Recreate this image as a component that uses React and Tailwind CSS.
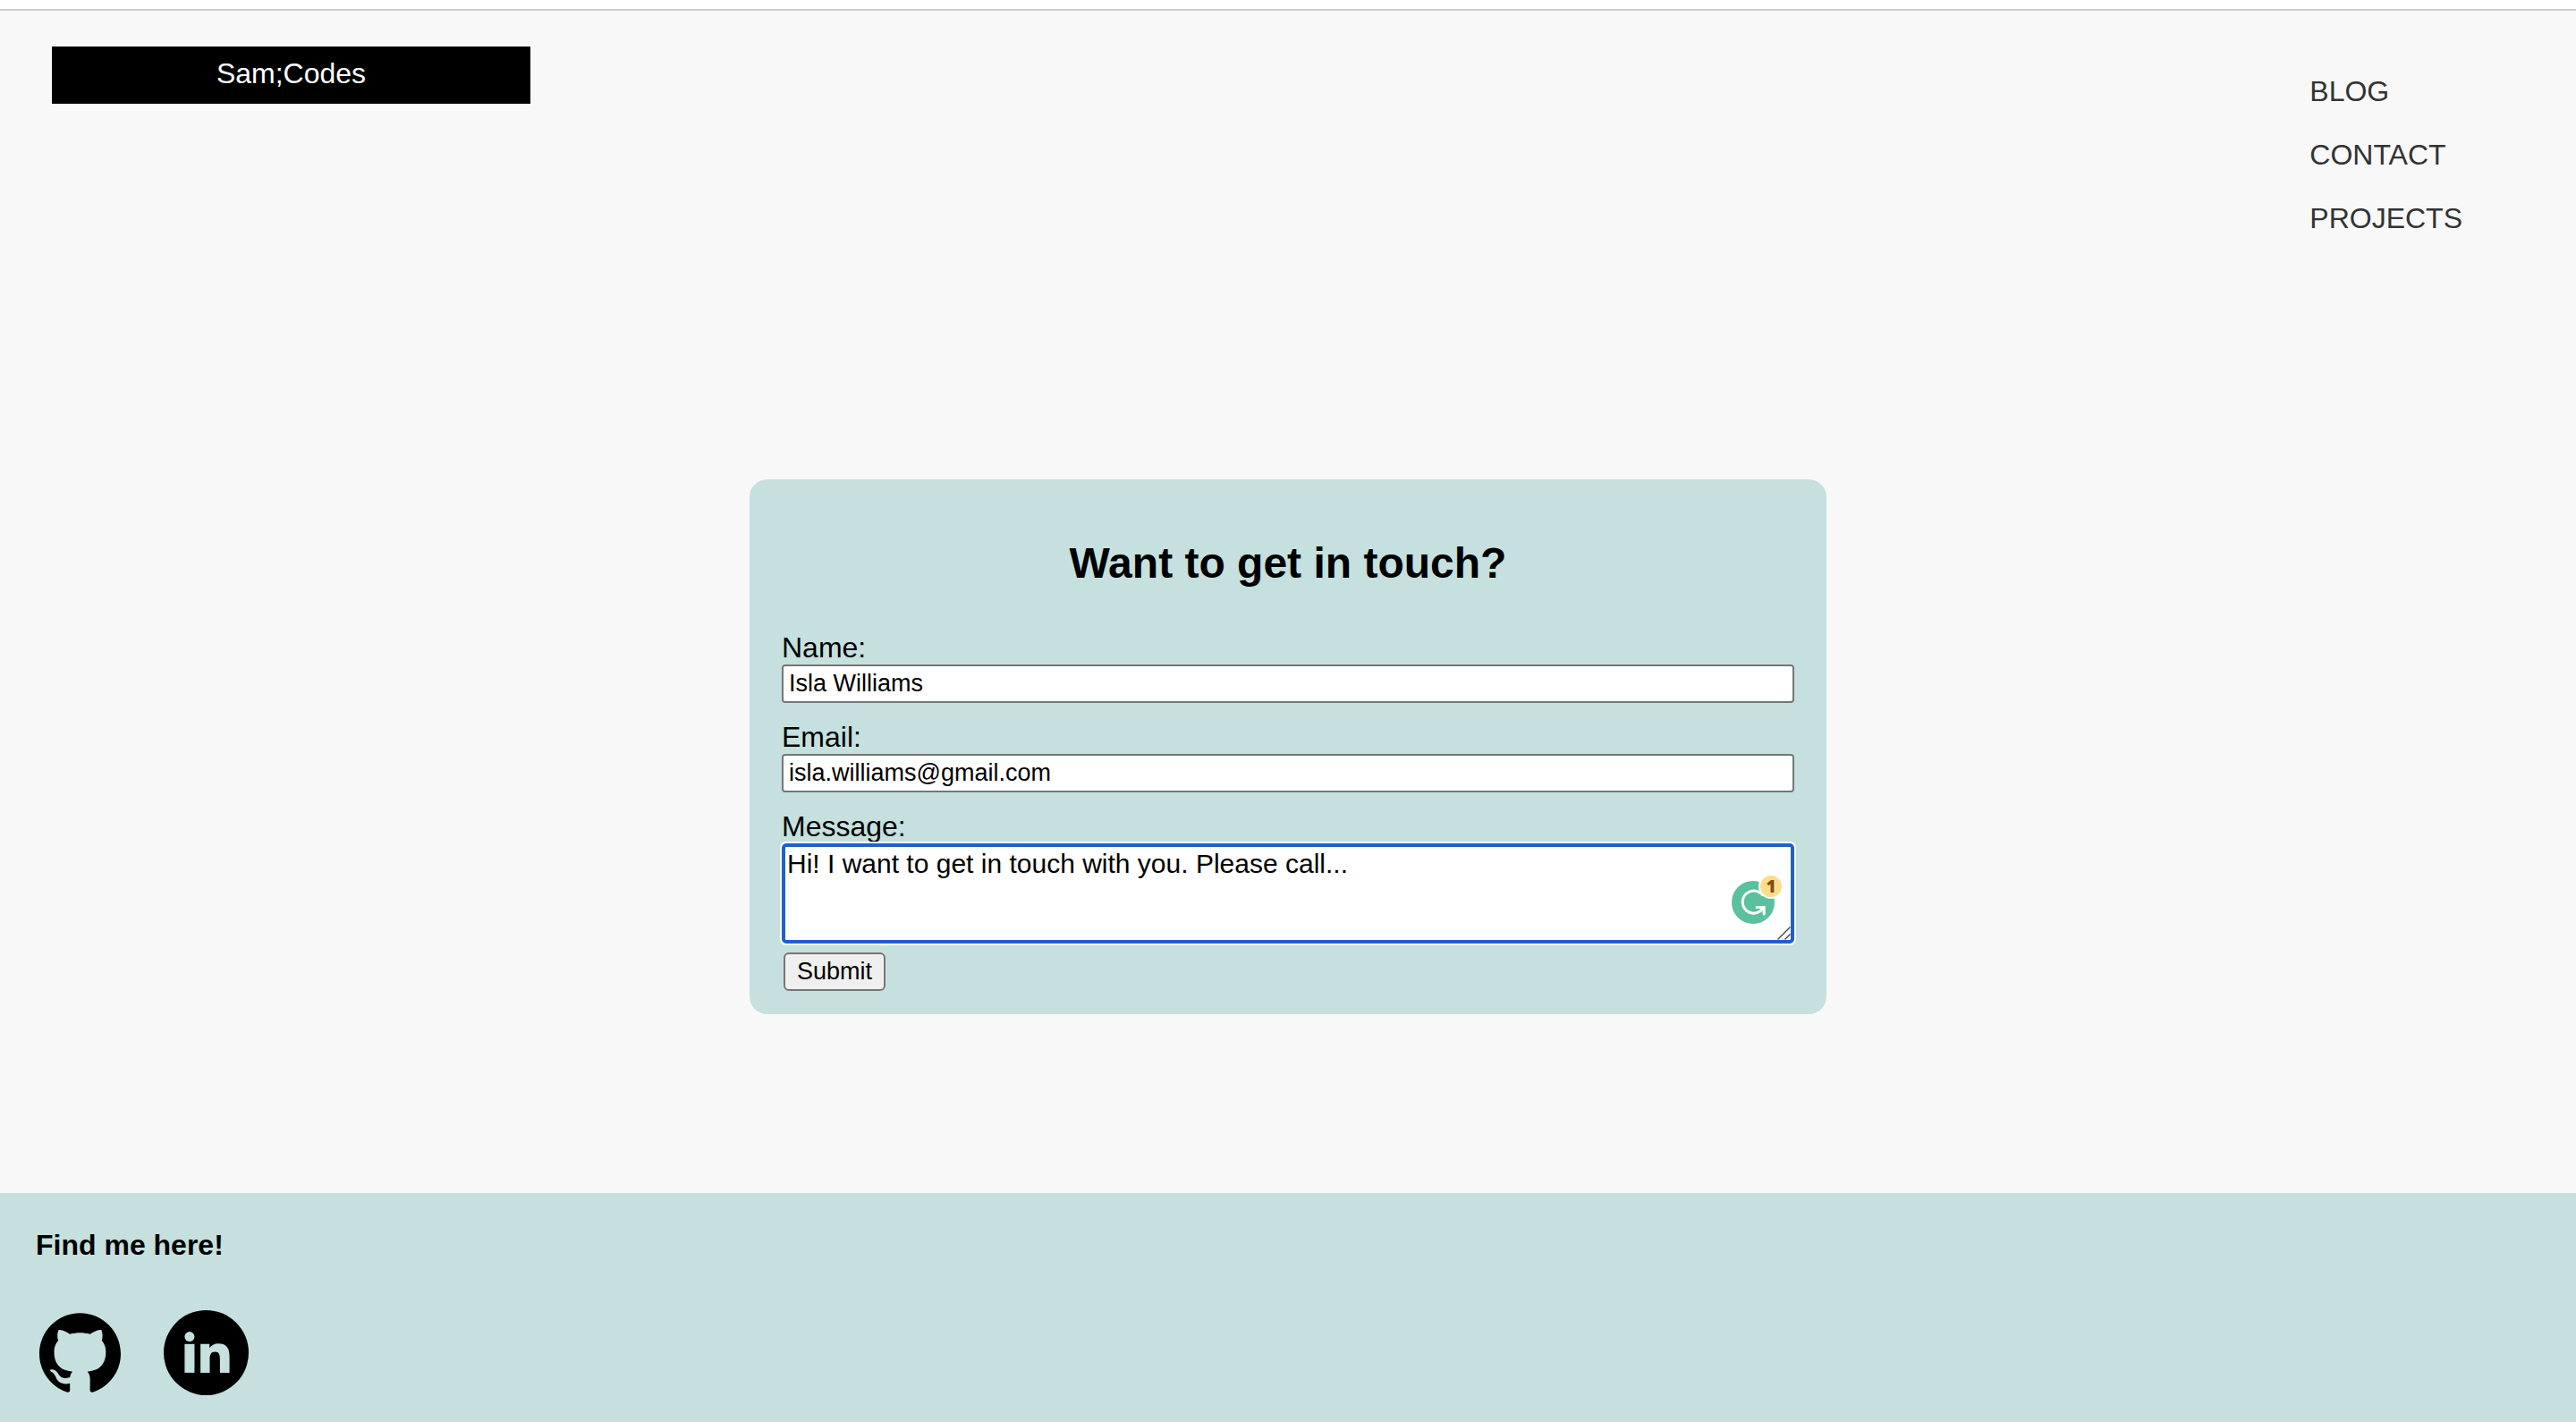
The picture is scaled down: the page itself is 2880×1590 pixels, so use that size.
import { SiGithub } from "react-icons/si";

const links = ["Blog", "Contact", "Projects"];

function TextField({ id, label, type, value }) {
  return (
    <div className="flex flex-col">
      <label htmlFor={id} className="text-[32px] leading-[37px]">
        {label}
      </label>
      <input
        id={id}
        type={type}
        defaultValue={value}
        className="h-[43px] w-full rounded-[4px] border-2 border-[#767676] bg-white px-1.5 text-[27px] text-black outline-none"
      />
    </div>
  );
}

function WritingBadge() {
  return (
    <div className="pointer-events-none absolute right-[12px] bottom-[20px] h-[56px] w-[58px]">
      <svg viewBox="0 0 58 56" className="h-full w-full" aria-hidden="true">
        <circle cx="24" cy="30" r="24" fill="#5bc09d" />
        <path
          d="M35 22.500A12.500 12.500 0 1 0 32 39.800L36 35.500"
          fill="none"
          stroke="#fff"
          strokeWidth="3"
        />
        <path
          d="M28 35.500H36.200V43"
          fill="none"
          stroke="#fff"
          strokeWidth="3"
          strokeLinecap="round"
        />
        <circle cx="44" cy="12" r="14" fill="#fff" />
        <circle cx="44" cy="12" r="12" fill="#fbde8b" />
      </svg>
      <span className="absolute top-0 right-[2px] w-6 text-center font-['Open_Sans',sans-serif] text-[19px] leading-6 font-extrabold text-[#7f4f16]">
        1
      </span>
    </div>
  );
}

function LinkedInLogo() {
  return (
    <svg viewBox="548 436 284 284" className="size-[95px]" aria-hidden="true">
      <circle cx="690" cy="578" r="142" fill="#000" />
      <g fill="#c5e0de">
        <circle cx="634.500" cy="524.500" r="16.500" />
        <path d="M618 549H651V645H618Z" />
        <path d="M671 549H701V562C707 553 717 547 731 547C758 547 768 563 768 592V645H736V599C736 585 733 575 720 575C706 575 702 585 702 599V645H671Z" />
      </g>
    </svg>
  );
}

export default function App() {
  return (
    <div className="flex min-h-screen flex-col bg-[#f8f8f8] font-['Liberation_Sans',Arial,sans-serif] text-black">
      <div className="h-3 border-b-2 border-[#cdcdcd] bg-white" />

      <header className="flex items-start justify-between pt-10 pr-[127px] pl-[58px]">
        <a
          href="#home"
          className="w-[535px] bg-black pt-3 pb-4 text-center text-[32px] leading-9 text-white"
        >
          Sam;Codes
        </a>
        <nav className="pt-8">
          <ul className="flex flex-col gap-[34px]">
            {links.map((link) => (
              <li key={link} className="text-[32px] leading-[37px] text-[#333] uppercase">
                <a href={"#" + link.toLowerCase()}>{link}</a>
              </li>
            ))}
          </ul>
        </nav>
      </header>

      <main className="flex flex-1 items-center justify-center pt-[72px]">
        <form className="w-[1204px] rounded-[20px] bg-[#c5e0de] px-9 pt-[66px] pb-[26px]">
          <h1 className="mb-12 text-center text-[48px] leading-[56px] font-bold">
            Want to get in touch?
          </h1>
          <div className="flex flex-col gap-5">
            <TextField id="name" label="Name:" type="text" value="Isla Williams" />
            <TextField id="email" label="Email:" type="email" value="isla.williams@gmail.com" />
            <div className="flex flex-col">
              <label htmlFor="message" className="text-[32px] leading-[37px]">
                Message:
              </label>
              <div className="relative">
                <textarea
                  id="message"
                  defaultValue="Hi! I want to get in touch with you. Please call..."
                  className="block h-28 w-full resize-none rounded-[5px] border-4 border-[#2160c8] bg-white px-0.5 pt-px text-[30px] leading-9 text-black ring-2 ring-white outline-none"
                />
                <svg
                  viewBox="0 0 15 15"
                  className="absolute right-1 bottom-1 size-[15px]"
                  fill="none"
                  stroke="#444"
                  strokeWidth="1.4"
                  aria-hidden="true"
                >
                  <path d="M0.500 14.500L14.500 0.500M8.500 14.500L14.500 8.500" />
                </svg>
                <WritingBadge />
              </div>
            </div>
          </div>
          <button
            type="submit"
            className="mt-2.5 ml-0.5 block h-[43px] rounded-[6px] border-2 border-[#767676] bg-[#efefef] px-[13px] text-[27px] leading-[37px]"
          >
            Submit
          </button>
        </form>
      </main>

      <footer className="bg-[#c5e0de] px-10 pt-10 pb-[30px]">
        <h2 className="text-[32px] leading-[37px] font-bold">Find me here!</h2>
        <div className="mt-[54px] flex items-center gap-12 pl-1">
          <a href="#github" aria-label="GitHub">
            <SiGithub className="size-[91px]" />
          </a>
          <a href="#linkedin" aria-label="LinkedIn">
            <LinkedInLogo />
          </a>
        </div>
      </footer>
    </div>
  );
}
